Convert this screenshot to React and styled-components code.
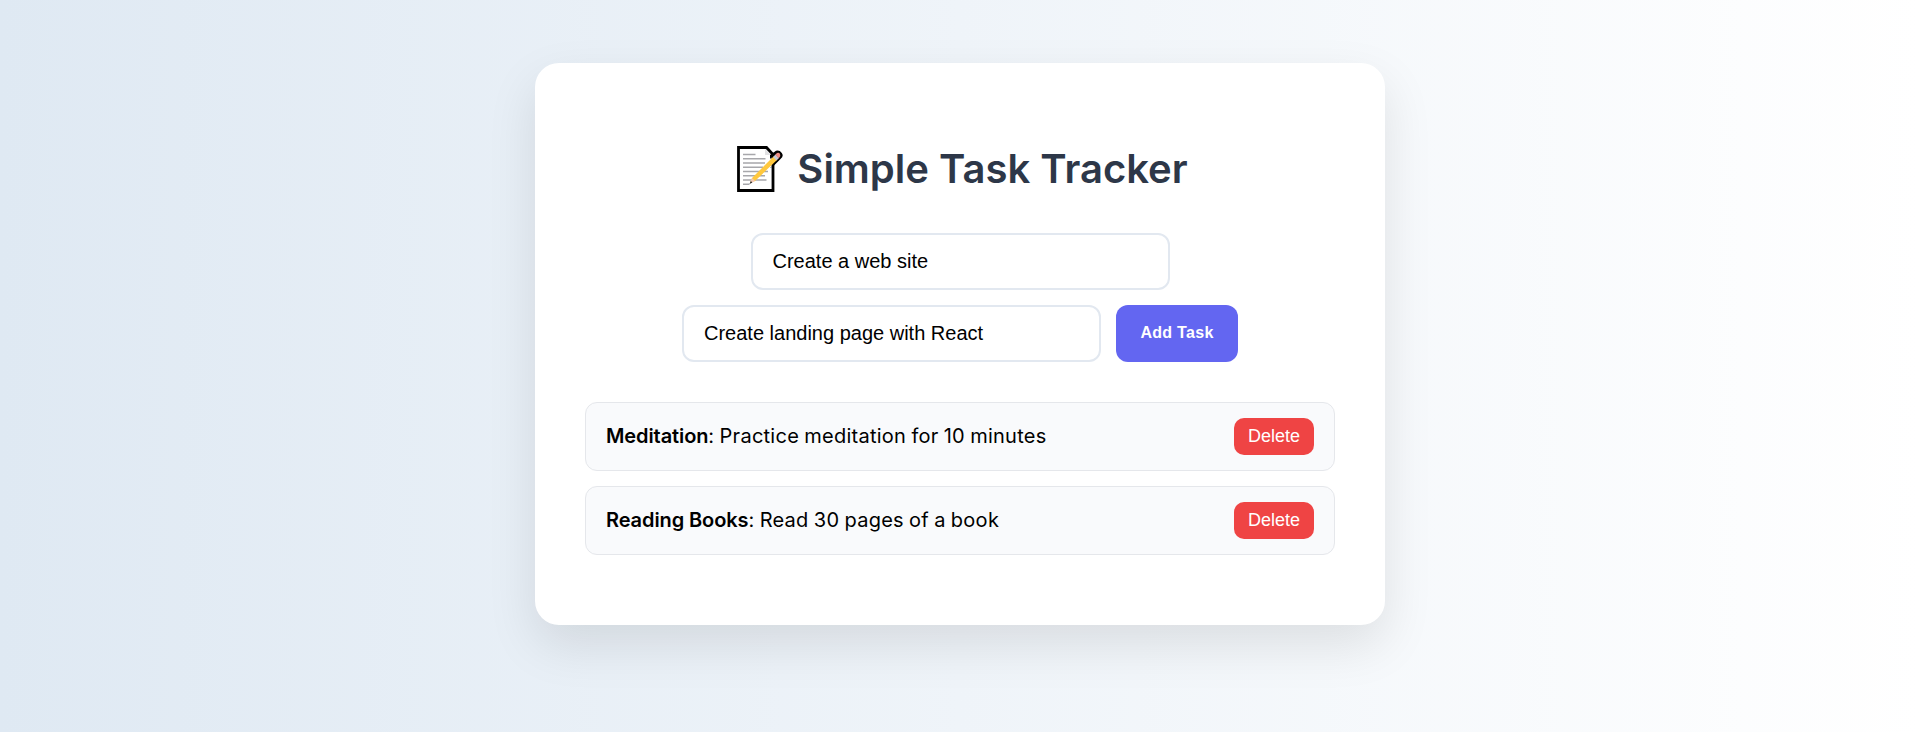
import React, { useState } from "react";
import styled, { createGlobalStyle } from "styled-components";

const GlobalStyle = createGlobalStyle`
  * { box-sizing: border-box; }
  body {
    margin: 0;
    font-family: Inter, sans-serif;
    background: linear-gradient(to right, #dfe9f3, #ffffff);
  }
`;

const Page = styled.main`
  min-height: 732px;
  padding-top: 63px;
`;

const Card = styled.section`
  width: 850px;
  height: 562px;
  margin: 0 auto;
  padding: 76px 50px 70px;
  background: #fff;
  border-radius: 24px;
  box-shadow: 0 20px 50px rgba(0, 0, 0, 0.1);
`;

const Title = styled.h1`
  display: flex;
  justify-content: center;
  align-items: center;
  height: 60px;
  margin: 0 0 34px;
  color: #2d3748;
  font-size: 40px;
  font-weight: 600;
  line-height: 60px;
  white-space: nowrap;
`;

const MemoIcon = styled.svg`
  width: 46px;
  height: 46px;
  margin: 0 14px 0 5px;
`;

const Form = styled.form`
  display: flex;
  flex-wrap: wrap;
  justify-content: center;
  gap: 15px;
  margin-bottom: 40px;
`;

const Field = styled.input`
  width: 419px;
  height: 57px;
  padding: 0 20px;
  border: 2px solid #e2e8f0;
  border-radius: 12px;
  background: #fff;
  color: #000;
  font: 20px "Liberation Sans", Arial, sans-serif;
  outline: none;
`;

const AddButton = styled.button`
  width: 122px;
  height: 57px;
  padding: 0 0 2px;
  border: 0;
  border-radius: 12px;
  background: #6366f1;
  color: #fff;
  font: bold 16px "Liberation Sans", Arial, sans-serif;
  letter-spacing: 0.3px;
`;

const TaskList = styled.ul`
  display: flex;
  flex-direction: column;
  gap: 15px;
  margin: 0;
  padding: 0;
  list-style: none;
`;

const TaskItem = styled.li`
  display: flex;
  align-items: center;
  justify-content: space-between;
  height: 69px;
  padding: 0 20px;
  border: 1px solid #e5e7eb;
  border-radius: 12px;
  background: #f9fafc;
`;

const TaskText = styled.span`
  padding-bottom: 2px;
  color: #000;
  font-size: 20px;
  line-height: 30px;
  letter-spacing: 0.26px;
  word-spacing: -0.7px;
  strong {
    font-weight: 600;
    letter-spacing: -0.1px;
    word-spacing: 0;
  }
`;

const DeleteButton = styled.button`
  width: 80px;
  height: 37px;
  padding: 0;
  border: 0;
  border-radius: 10px;
  background: #ef4444;
  color: #fff;
  font: 18px "Liberation Sans", Arial, sans-serif;
`;

const initialTasks = [
  { name: "Meditation", detail: "Practice meditation for 10 minutes" },
  { name: "Reading Books", detail: "Read 30 pages of a book" },
];

function Memo() {
  return (
    <MemoIcon viewBox="0 0 46 46" aria-hidden="true">
      <path d="M1.5 1.5H29.5L36 8.5V44.5H1.5Z" fill="#fff" stroke="#000" strokeWidth="2.8" />
      <path d="M28 3V9H34.5Z" fill="#e2e2e4" />
      <path d="M6 8.5H18.5M6 12.7H28.5M6 17H28M6 21.3H26M6 25.5H31M6 29.7H28M6 34H29.5M6 38.2H12.5" stroke="#a7a7ab" strokeWidth="1.4" />
      <path d="M33 9L39 4.8Q42.5 3.8 44.8 7T43.5 13L36 20.5L33 22Z" fill="#000" />
      <path d="M33 13L34.5 11.5V21L33 22Z" fill="#fff" />
      <path d="M13 37L15 32L36.5 10.5L40 14L18 35Z" fill="#ffc83d" />
      <path d="M13 37.5L15 32L18 35Z" fill="#f3c7b5" />
      <path d="M12.5 38L13.8 35L15.4 36.6Z" fill="#333" />
      <path d="M36 11L38.5 8.5L42 12L39.5 14.5Z" fill="#c5c9d5" />
      <path d="M38.3 8.7L40 7Q42 6 43 8T42.2 11.8L41.6 12.2Z" fill="#ed8c83" />
    </MemoIcon>
  );
}

export default function App() {
  const [tasks, setTasks] = useState(initialTasks);
  const [name, setName] = useState("Create a web site");
  const [detail, setDetail] = useState("Create landing page with React");

  const addTask = (event) => {
    event.preventDefault();
    if (!name.trim()) return;
    setTasks([...tasks, { name, detail }]);
    setName("");
    setDetail("");
  };

  return (
    <Page>
      <GlobalStyle />
      <Card>
        <Title><Memo />Simple Task Tracker</Title>
        <Form onSubmit={addTask}>
          <Field value={name} onChange={(e) => setName(e.target.value)} />
          <Field value={detail} onChange={(e) => setDetail(e.target.value)} />
          <AddButton type="submit">Add Task</AddButton>
        </Form>
        <TaskList>
          {tasks.map((task, index) => (
            <TaskItem key={index}>
              <TaskText><strong>{task.name}</strong>: {task.detail}</TaskText>
              <DeleteButton onClick={() => setTasks(tasks.filter((_, i) => i !== index))}>Delete</DeleteButton>
            </TaskItem>
          ))}
        </TaskList>
      </Card>
    </Page>
  );
}
